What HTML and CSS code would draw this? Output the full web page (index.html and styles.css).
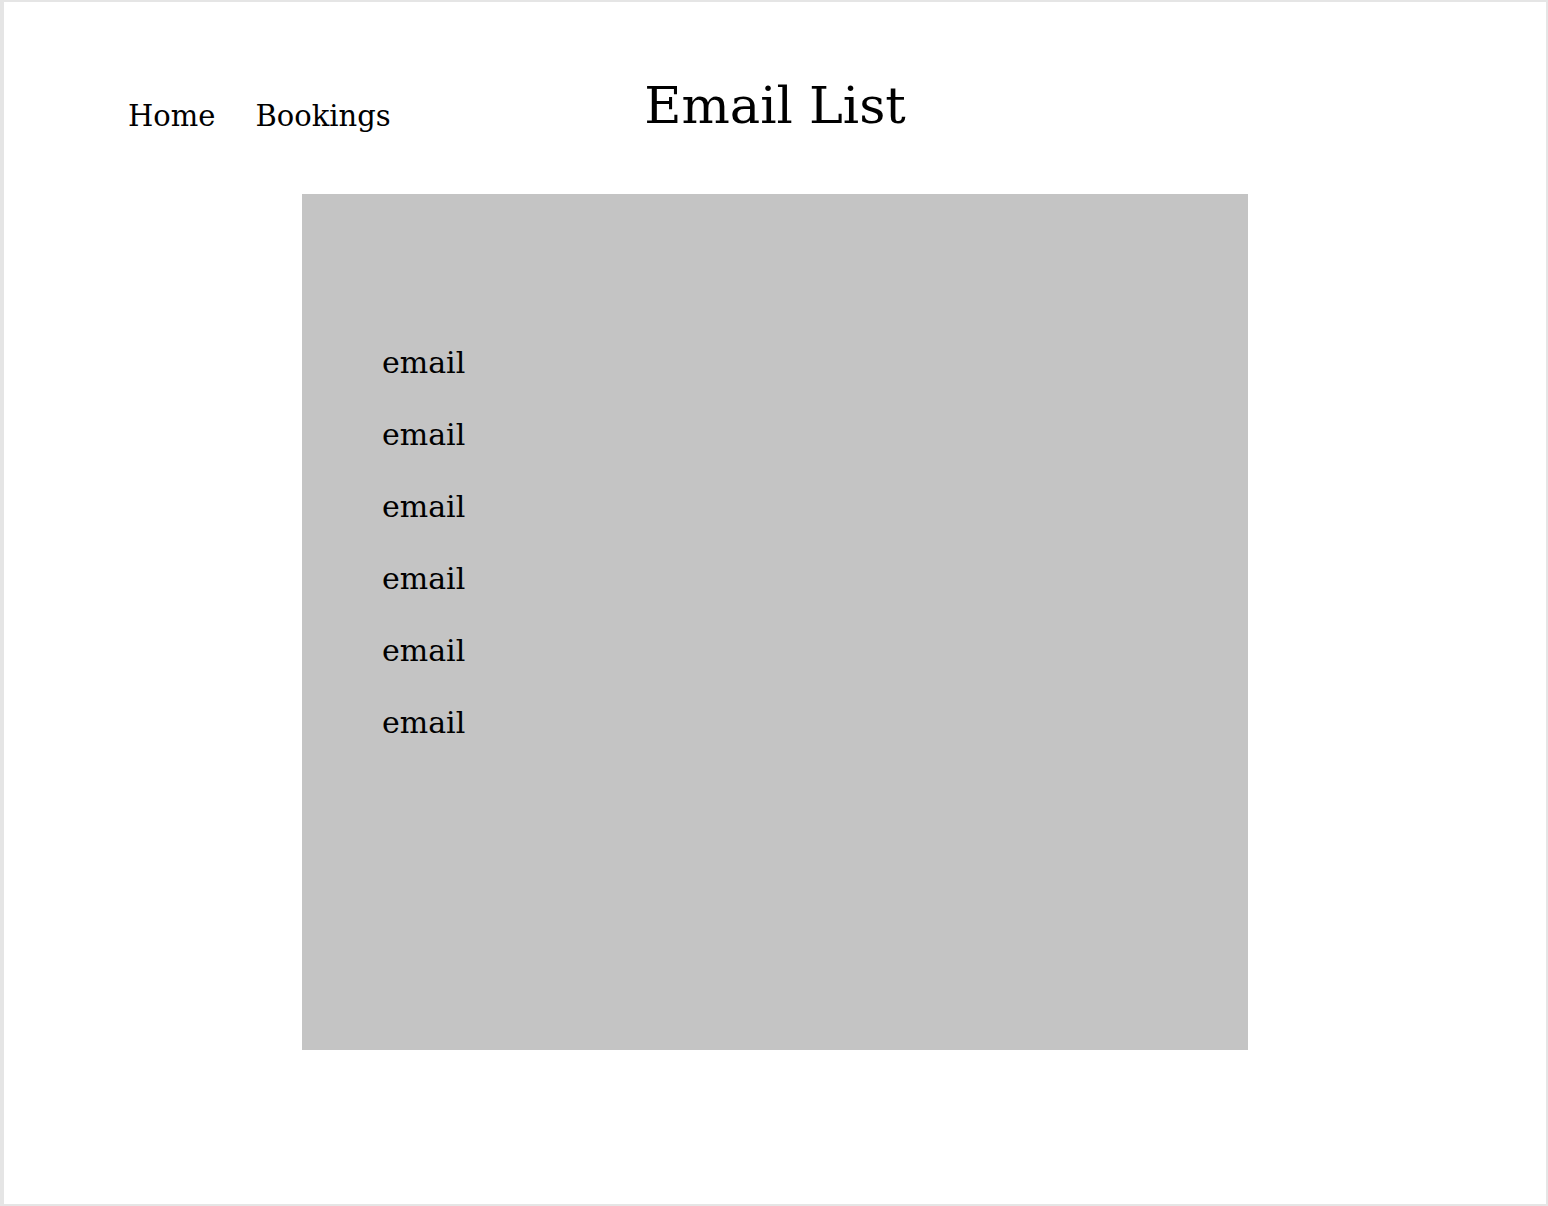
FILE: index.html
```html
<!DOCTYPE html>
<html lang="en">
<head>
<meta charset="utf-8">
<title>Email List</title>
<link rel="stylesheet" href="styles.css">
</head>
<body>
<div class="frame">
  <header class="header">
    <nav class="nav">
      <a class="nav-link" href="#">Home</a>
      <a class="nav-link" href="#">Bookings</a>
    </nav>
    <h1 class="title">Email List</h1>
  </header>
  <main class="panel">
    <ul class="email-list">
      <li class="email">email</li>
      <li class="email">email</li>
      <li class="email">email</li>
      <li class="email">email</li>
      <li class="email">email</li>
      <li class="email">email</li>
    </ul>
  </main>
</div>
</body>
</html>
```
FILE: styles.css
```css
* { box-sizing: border-box; }
html, body { margin: 0; padding: 0; background: #fff; }
body {
  font-family: "DejaVu Serif", serif;
  color: #000;
}
.frame {
  width: 1548px;
  height: 1206px;
  border-style: solid;
  border-color: #e5e5e5;
  border-width: 2px 2px 2px 4px;
  position: relative;
}
.header {
  position: relative;
  height: 190px;
}
.nav {
  display: flex;
  gap: 40px;
  padding: 96px 0 0 124px;
}
.nav-link {
  color: #000;
  text-decoration: none;
  font-size: 29px;
  line-height: 36px;
}
.title {
  position: absolute;
  left: 0;
  right: 0;
  top: 74px;
  margin: 0;
  text-align: center;
  font-weight: normal;
  font-size: 51px;
  line-height: 60px;
}
.panel {
  width: 946px;
  height: 856px;
  margin: 2px auto 0;
  background: #c4c4c4;
  padding: 151px 0 0 80px;
}
.email-list {
  list-style: none;
  margin: 0;
  padding: 0;
  display: flex;
  flex-direction: column;
  gap: 36px;
}
.email {
  font-size: 30px;
  line-height: 36px;
}
```
